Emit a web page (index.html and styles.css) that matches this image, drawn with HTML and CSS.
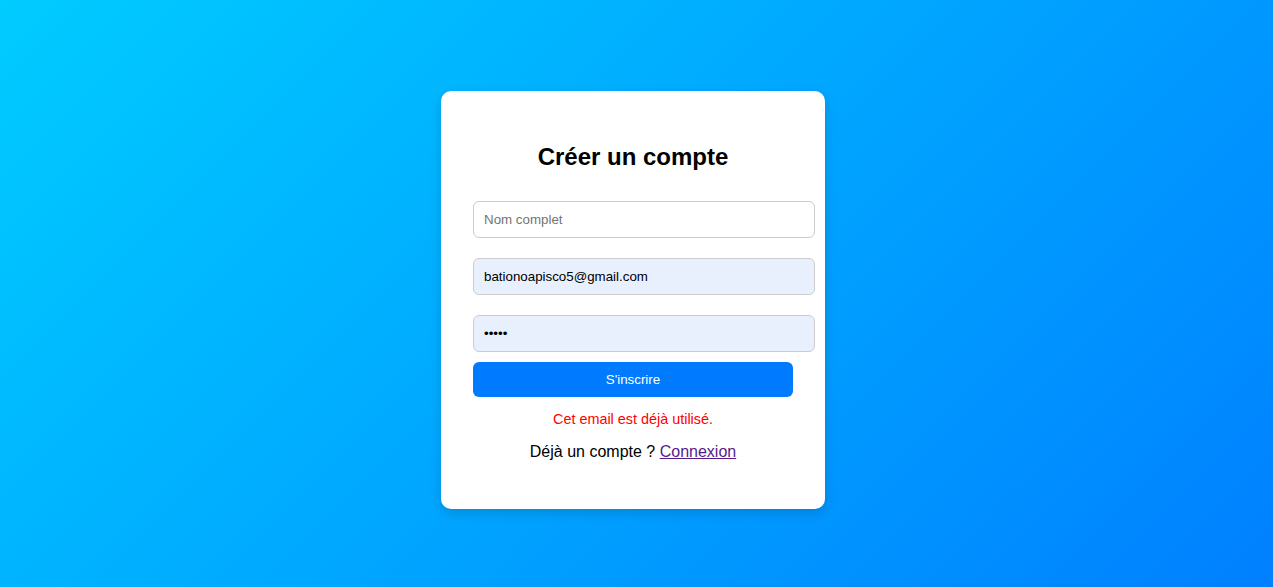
FILE: index.html
```html
<!DOCTYPE html>
<html lang="fr">
<head>
<meta charset="utf-8">
<title>Créer un compte</title>
<link rel="stylesheet" href="styles.css">
</head>
<body>
<main class="page">
  <div class="card">
    <h2 class="title">Créer un compte</h2>
    <form class="form">
      <input class="field" type="text" placeholder="Nom complet">
      <input class="field field-filled" type="email" value="bationoapisco5@gmail.com">
      <input class="field field-filled" type="password" value="12345">
      <button class="submit" type="button">S'inscrire</button>
    </form>
    <p class="error">Cet email est déjà utilisé.</p>
    <p class="switch">Déjà un compte ? <a class="link" href="#">Connexion</a></p>
  </div>
</main>
</body>
</html>
```
FILE: styles.css
```css
html, body {
  margin: 0;
  padding: 0;
}
body {
  font-family: "Liberation Sans", Arial, sans-serif;
  background: linear-gradient(135deg, #00ccff, #0080ff);
  min-height: 100vh;
}
.page {
  min-height: 100vh;
  box-sizing: border-box;
  padding: 13px 7px 0 0;
  display: flex;
  justify-content: center;
  align-items: center;
}
.card {
  background: #fff;
  width: 320px;
  padding: 32px;
  border-radius: 10px;
  box-shadow: 0 4px 12px rgba(0, 0, 0, 0.15);
  text-align: center;
}
.title {
  font-size: 24px;
  font-weight: bold;
  margin: 20px 0 20px;
  color: #000;
}
.form {
  display: flex;
  flex-direction: column;
  align-items: flex-start;
}
.field {
  width: 100%;
  box-sizing: content-box;
  padding: 10px;
  margin: 10px 0;
  border: 1px solid #ccc;
  border-radius: 6px;
  font-family: "Liberation Sans", Arial, sans-serif;
  font-size: 13.33px;
  line-height: 15px;
  color: #000;
  background: #fff;
  outline: none;
}
.field + .field {
  margin-top: 10px;
}
.field-filled {
  background: #e8f0fe;
}
.submit {
  width: 100%;
  padding: 10px;
  border: none;
  border-radius: 6px;
  background: #007bff;
  color: #fff;
  font-family: "Liberation Sans", Arial, sans-serif;
  font-size: 13.33px;
  line-height: 15px;
  margin: 0;
}
.error {
  color: #ff0000;
  font-size: 14.4px;
  margin: 14px 0;
}
.switch {
  font-size: 16px;
  margin: 16px 0 16px;
  color: #000;
}
.link {
  color: #551a8b;
}
```
